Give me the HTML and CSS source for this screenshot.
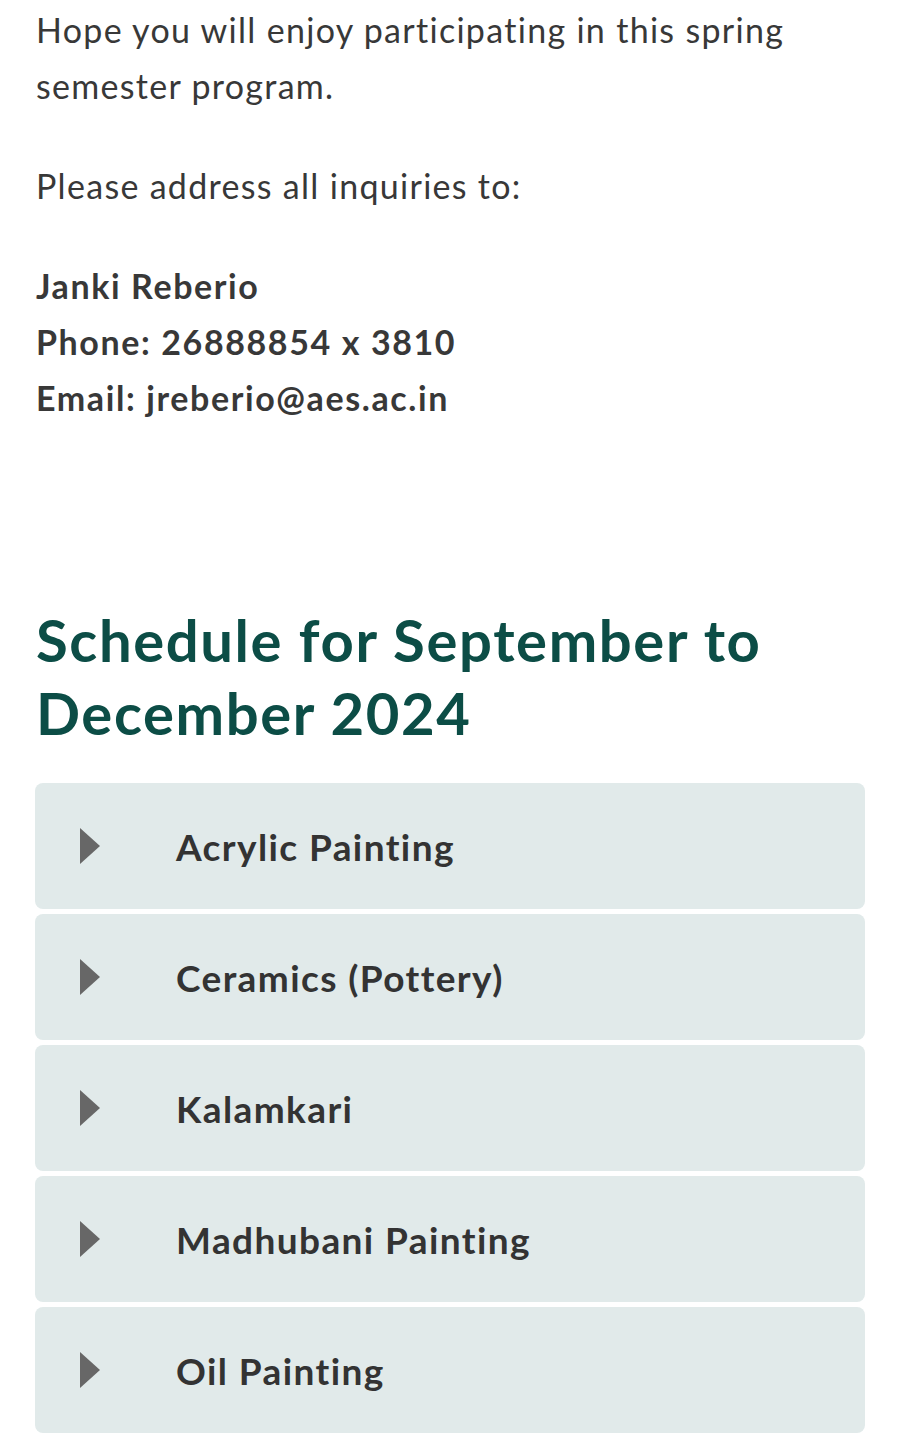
FILE: index.html
```html
<!DOCTYPE html>
<html>
<head>
<meta charset="utf-8">
<link rel="stylesheet" href="styles.css">
</head>
<body>
<main class="page">
  <p class="para">Hope you will enjoy participating in this spring semester program.</p>
  <p class="para">Please address all inquiries to:</p>
  <p class="para contact">Janki Reberio<br>Phone: 26888854 x 3810<br>Email: jreberio@aes.ac.in</p>
  <h2 class="heading">Schedule for September to December 2024</h2>
  <div class="accordion">
    <div class="item"><span class="arrow"></span><span class="label">Acrylic Painting</span></div>
    <div class="item"><span class="arrow"></span><span class="label">Ceramics (Pottery)</span></div>
    <div class="item"><span class="arrow"></span><span class="label">Kalamkari</span></div>
    <div class="item"><span class="arrow"></span><span class="label">Madhubani Painting</span></div>
    <div class="item"><span class="arrow"></span><span class="label">Oil Painting</span></div>
  </div>
</main>
</body>
</html>
```
FILE: styles.css
```css
html, body {
  margin: 0;
  padding: 0;
  background: #ffffff;
}
.page {
  padding: 2px 35px 0 36px;
  font-family: "Lato", "Noto Sans", sans-serif;
  color: #383838;
}
.para {
  margin: 0 0 44px 0;
  font-size: 34px;
  line-height: 56px;
  letter-spacing: 1.3px;
}
.contact {
  font-weight: 700;
  letter-spacing: 1.6px;
  margin-bottom: 177px;
}
.heading {
  margin: 0 0 34px 0;
  font-size: 58px;
  line-height: 73px;
  font-weight: 700;
  letter-spacing: 1.6px;
  color: #0c4d46;
}
.accordion {
  display: flex;
  flex-direction: column;
  gap: 5px;
  margin-left: -1px;
}
.item {
  display: flex;
  align-items: center;
  height: 126px;
  background: #e1eaea;
  border-radius: 8px;
  padding-left: 45px;
  box-sizing: border-box;
}
.arrow {
  width: 0;
  height: 0;
  border-top: 18px solid transparent;
  border-bottom: 18px solid transparent;
  border-left: 20px solid #676767;
  margin-right: 76px;
}
.label {
  font-size: 37px;
  font-weight: 700;
  letter-spacing: 1.4px;
  color: #333333;
}
```
